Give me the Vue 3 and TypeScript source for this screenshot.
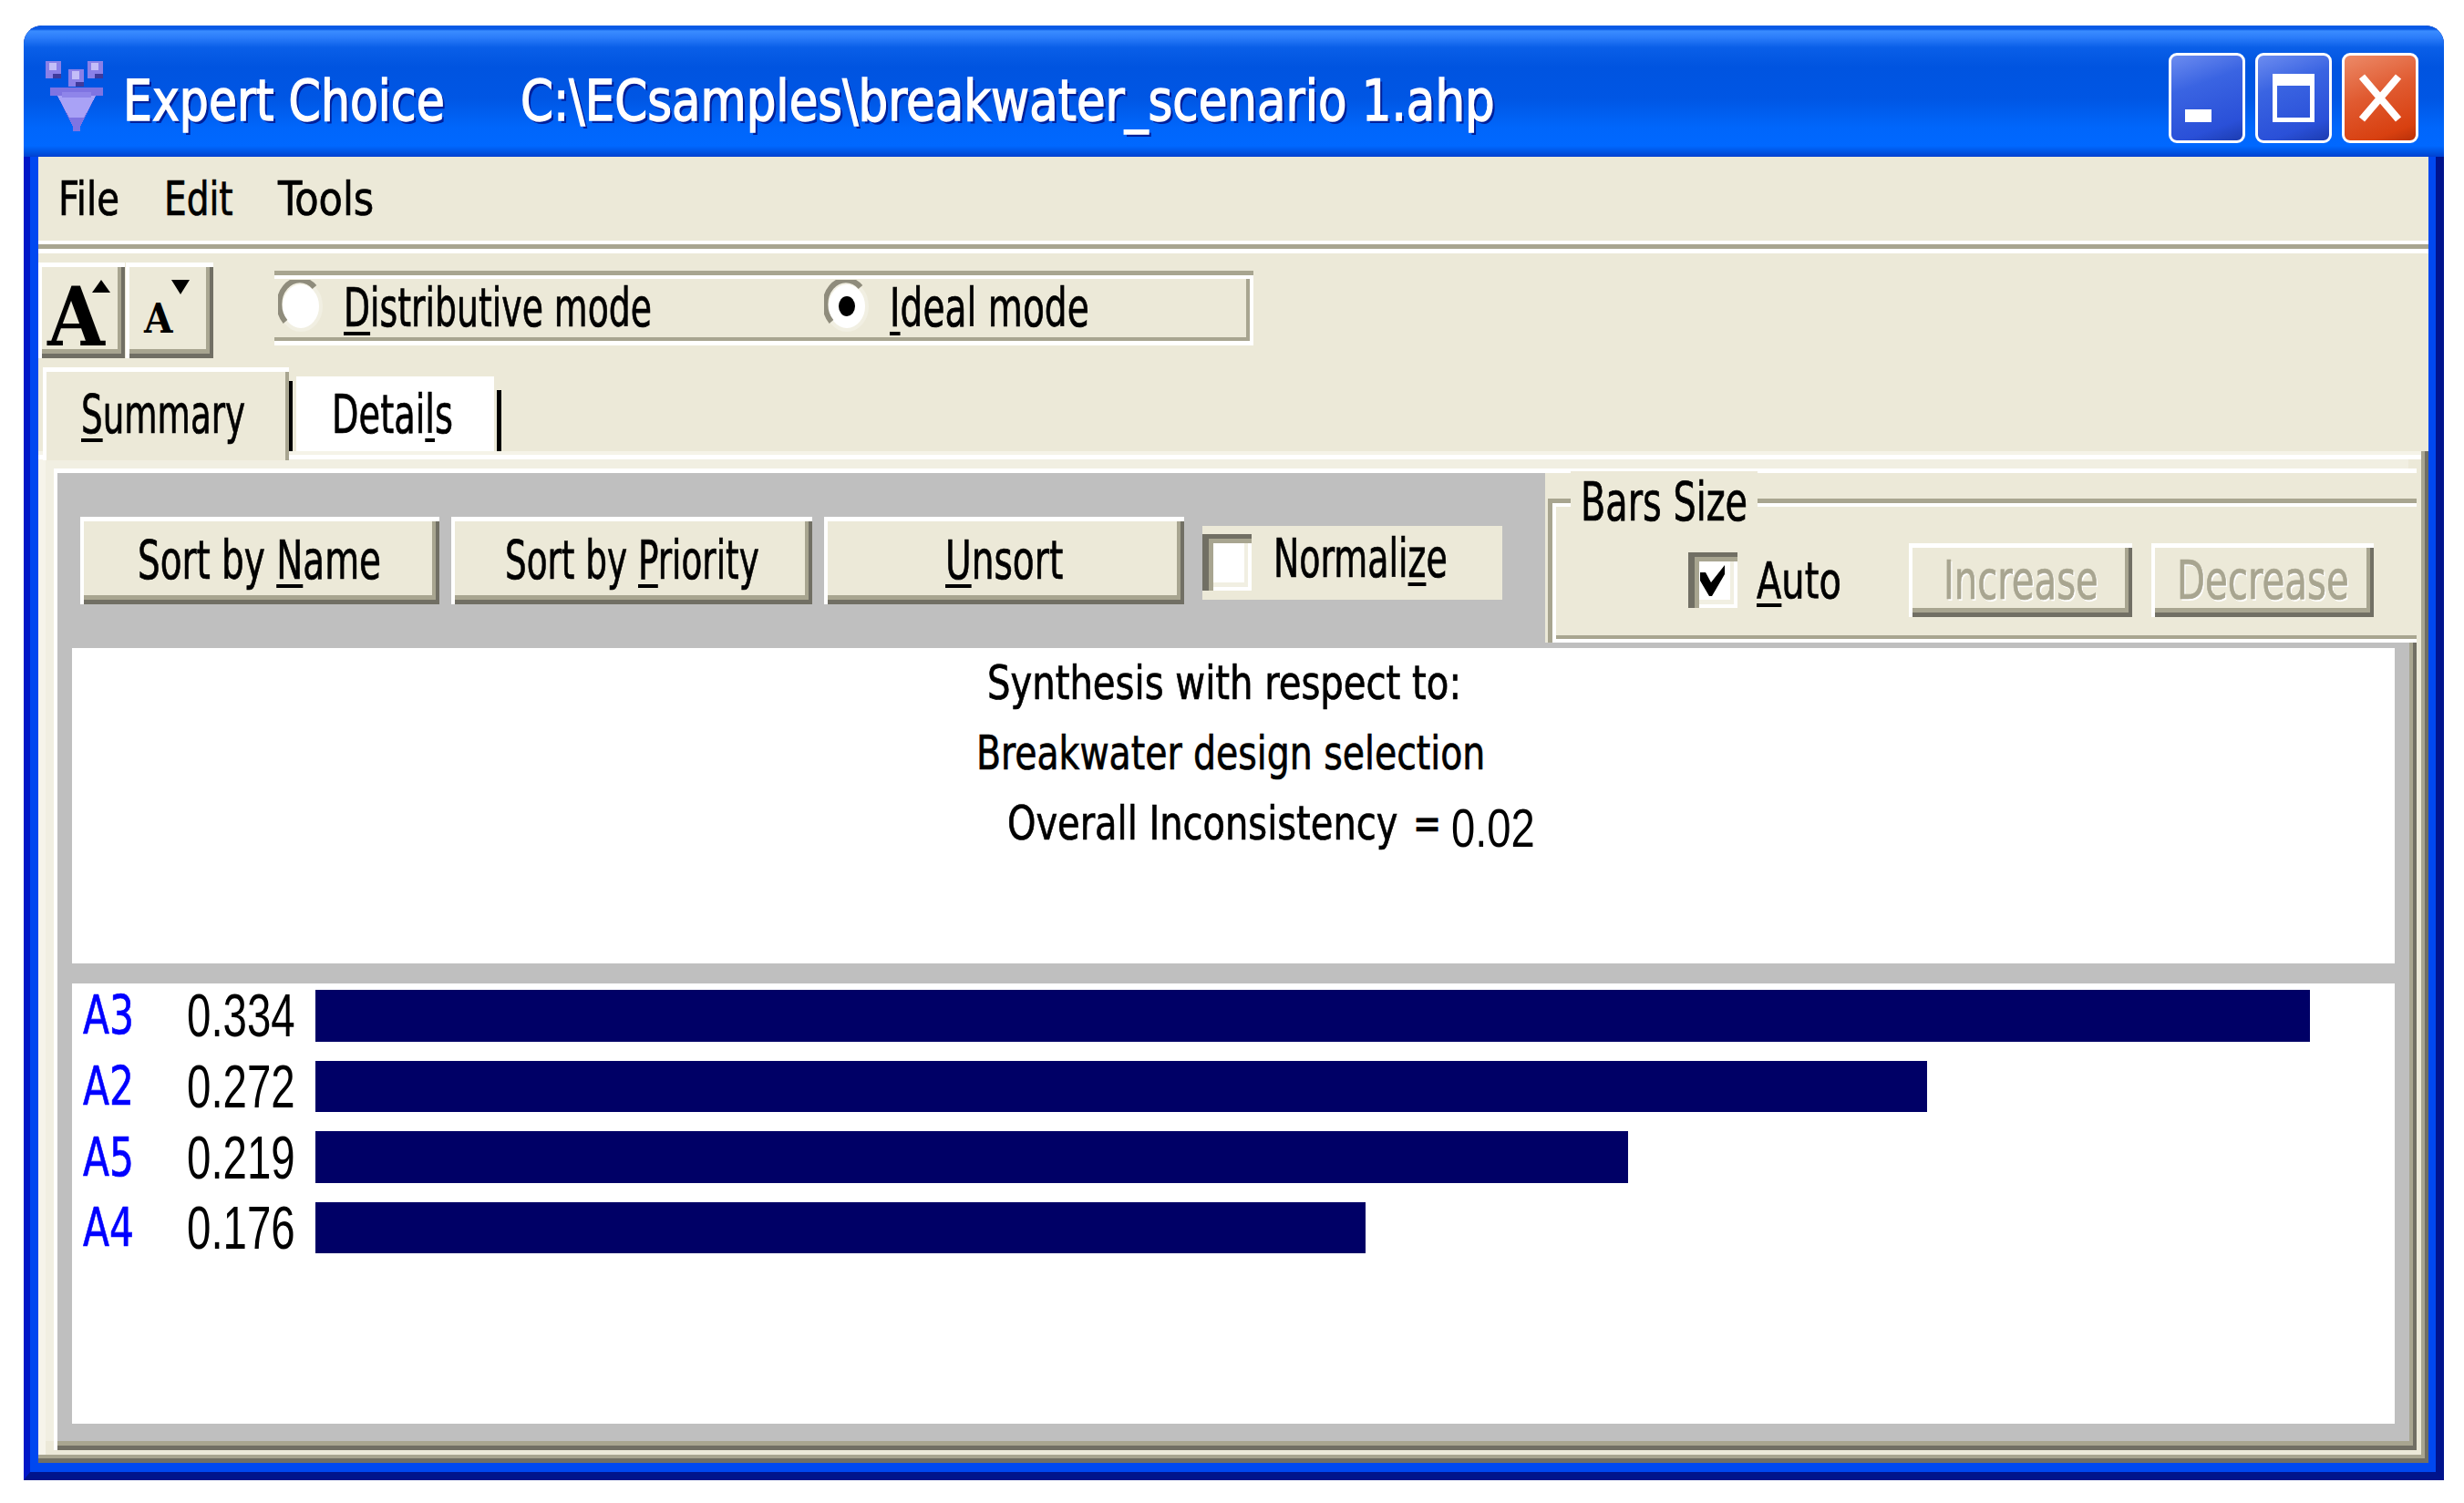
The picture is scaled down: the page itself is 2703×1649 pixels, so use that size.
<script setup lang="ts">
import type { Directive } from 'vue'

interface Row { name: string; value: string; width: number }

const rows: Row[] = [
  { name: 'A3', value: '0.334', width: 2188 },
  { name: 'A2', value: '0.272', width: 1768 },
  { name: 'A5', value: '0.219', width: 1440 },
  { name: 'A4', value: '0.176', width: 1152 },
]

// The reference is a stretched bitmap: its type is much narrower than it is tall.
const vFit: Directive<HTMLElement, number> = {
  mounted(el, binding) {
    const natural = el.offsetWidth
    el.style.transform = `scaleX(${binding.value / natural})`
    el.style.marginRight = `${binding.value - natural}px`
  },
}
</script>

<template>
  <div class="window">
    <header class="titlebar">
      <svg class="app-icon" width="64" height="77" viewBox="0 0 64 77" shape-rendering="crispEdges">
        <rect x="0" y="0" width="17" height="19" fill="#8a80e8" />
        <rect x="4" y="2" width="8" height="8" fill="#c4bef8" />
        <rect x="8" y="14" width="9" height="5" fill="#3f3a9c" />
        <rect x="25" y="9" width="17" height="19" fill="#8a80e8" />
        <rect x="29" y="11" width="8" height="9" fill="#c4bef8" />
        <rect x="33" y="23" width="9" height="5" fill="#3f3a9c" />
        <rect x="46" y="0" width="17" height="19" fill="#8a80e8" />
        <rect x="50" y="2" width="8" height="8" fill="#c4bef8" />
        <rect x="54" y="14" width="9" height="5" fill="#3f3a9c" />
        <polygon points="5,29 63,29 63,38 55,38 38,72 38,77 30,77 30,72 13,38 5,38" fill="#7f74e2" />
        <polygon points="13,38 55,38 42,62 26,62" fill="#a9a2f6" />
        <polygon points="18,34 50,34 50,40 18,40" fill="#8f85ea" />
      </svg>
      <span class="t title-text first" v-fit="353">Expert Choice</span>
      <span class="t title-text second" v-fit="1069">C:\ECsamples\breakwater_scenario 1.ahp</span>
      <div class="caption">
        <button class="cap-btn blue" type="button" aria-label="Minimize"><i class="min-glyph"></i></button>
        <button class="cap-btn blue" type="button" aria-label="Maximize"><i class="max-glyph"></i></button>
        <button class="cap-btn red" type="button" aria-label="Close">
          <svg width="46" height="53" viewBox="0 0 46 53"><path d="M3 3 L43 50 M43 3 L3 50" stroke="#fff" stroke-width="8" fill="none" /></svg>
        </button>
      </div>
    </header>

    <div class="frame">
      <div class="client">
        <nav class="menu">
          <span class="t menu-item" v-fit="67">File</span>
          <span class="t menu-item" v-fit="76">Edit</span>
          <span class="t menu-item" v-fit="105">Tools</span>
        </nav>
        <div class="menu-sep"></div>

        <div class="toolbar">
          <div class="font-btns">
            <button class="raised font-btn big" type="button">
              <span class="big-a">A</span>
              <svg class="tri-up" width="20" height="14" viewBox="0 0 20 14"><polygon points="10,0 20,14 0,14" /></svg>
            </button>
            <button class="raised font-btn small" type="button">
              <span class="small-a">A</span>
              <svg class="tri-down" width="20" height="16" viewBox="0 0 20 16"><polygon points="0,0 20,0 10,16" /></svg>
            </button>
          </div>
          <div class="mode-group">
            <svg class="radio" width="50" height="58" viewBox="0 0 50 58">
              <ellipse cx="25" cy="29" rx="22" ry="26" fill="#fff" stroke="#f1efe2" stroke-width="4" />
              <path d="M8 46 A22 26 0 0 1 40 8" fill="none" stroke="#8f8c7c" stroke-width="6" />
            </svg>
            <span class="t label" v-fit="338"><u>D</u>istributive mode</span>
            <svg class="radio second-radio" width="50" height="58" viewBox="0 0 50 58">
              <ellipse cx="25" cy="29" rx="22" ry="26" fill="#fff" stroke="#f1efe2" stroke-width="4" />
              <path d="M8 46 A22 26 0 0 1 40 8" fill="none" stroke="#8f8c7c" stroke-width="6" />
              <ellipse cx="25" cy="29" rx="9" ry="11" fill="#000" />
            </svg>
            <span class="t label" v-fit="219"><u>I</u>deal mode</span>
          </div>
        </div>

        <div class="tabs">
          <div class="tab active"><span class="t label" v-fit="180"><u>S</u>ummary</span></div>
          <div class="tab details"><div class="details-face"><span class="t label" v-fit="133">Detai<u>l</u>s</span></div></div>
        </div>

        <div class="tab-frame">
          <div class="tab-inner">
            <div class="head">
              <div class="sort-bar">
                <button class="raised cmd w-name" type="button"><span class="t label" v-fit="267">Sort by <u>N</u>ame</span></button>
                <button class="raised cmd w-priority" type="button"><span class="t label" v-fit="279">Sort by <u>P</u>riority</span></button>
                <button class="raised cmd w-unsort" type="button"><span class="t label" v-fit="129"><u>U</u>nsort</span></button>
                <label class="normalize">
                  <span class="check"></span>
                  <span class="t label normalize-text" v-fit="191">Normali<u>z</u>e</span>
                </label>
              </div>
              <div class="bars-group">
                <div class="groove">
                  <span class="legend"><span class="t label" v-fit="183">Bars Size</span></span>
                  <span class="check auto-check">
                    <svg width="30" height="36" viewBox="0 0 30 36"><path d="M1 9 L7 9 L13 20 L28 1 L28 11 L14 35 L11 35 L1 18 Z" fill="#000" /></svg>
                  </span>
                  <span class="t label auto-text" v-fit="93"><u>A</u>uto</span>
                  <button class="raised cmd off w-inc" type="button" disabled><span class="t label" v-fit="170">Increase</span></button>
                  <button class="raised cmd off w-dec" type="button" disabled><span class="t label" v-fit="189">Decrease</span></button>
                </div>
              </div>
            </div>

            <section class="pane upper">
              <p class="line l1"><span class="t text52" v-fit="520">Synthesis with respect to:</span></p>
              <p class="line l2"><span class="t text52" v-fit="558">Breakwater design selection</span></p>
              <p class="line l3">
                <span class="t text52" v-fit="428">Overall Inconsistency</span>
                <span class="t text52 equals" v-fit="31">=</span>
                <span class="t inconsistency" v-fit="92">0.02</span>
              </p>
            </section>

            <section class="pane lower">
              <div v-for="row in rows" :key="row.name" class="row">
                <span class="name-cell"><span class="t label alt" v-fit="56">{{ row.name }}</span></span>
                <span class="value-cell"><span class="t value" v-fit="119">{{ row.value }}</span></span>
                <span class="bar" :style="{ width: row.width + 'px' }"></span>
              </div>
            </section>
          </div>
        </div>
      </div>
    </div>
  </div>
</template>

<style>
html, body { margin: 0; background: #fff; }
</style>

<style scoped>
.window {
  box-sizing: border-box;
  width: 2655px;
  height: 1596px;
  margin: 28px 0 0 26px;
  display: flex;
  flex-direction: column;
  border-radius: 20px 20px 0 0;
  overflow: hidden;
  background: #00138c;
  font-family: "DejaVu Sans", "Liberation Sans", sans-serif;
  font-stretch: condensed;
  color: #000;
}
.t {
  display: inline-block;
  white-space: nowrap;
  transform-origin: left center;
  flex: none;
  -webkit-text-stroke: 0.7px currentColor;
}
u { text-decoration-thickness: 4px; text-underline-offset: 6px; }

/* title bar */
.titlebar {
  box-sizing: border-box;
  height: 144px;
  flex: none;
  display: flex;
  align-items: flex-start;
  padding: 22px 28px 0 24px;
  background: linear-gradient(180deg, #0a5ae6 0, #0a5ae6 4px, #3a8cff 6px, #2c7dfa 13px, #0a5fe8 24px, #0054e0 45px, #0056e4 80px, #0066fb 112px, #0068ff 132px, #0050de 140px, #0040d0 144px);
}
.app-icon { margin-top: 17px; flex: none; }
.title-text {
  font-size: 63px;
  line-height: 122px;
  color: #fff;
  text-shadow: 3px 3px 0 #00209a;
  -webkit-text-stroke: 1.4px #fff;
}
.first { margin-left: 21px; }
.second { margin-left: 83px; }
.caption { margin: 8px 0 0 auto; display: flex; flex: none; }
.cap-btn {
  box-sizing: border-box;
  width: 84px;
  height: 99px;
  padding: 0;
  margin-left: 11px;
  border: 3px solid #fff;
  border-radius: 9px;
  position: relative;
  display: block;
}
.blue { background: linear-gradient(160deg, #6c8cf0 0, #3a64e2 35%, #2a50d8 80%, #1c3cb0 100%); }
.red { background: linear-gradient(160deg, #ec8a68 0, #e05a30 45%, #d84010 85%, #b83008 100%); }
.min-glyph { position: absolute; left: 15px; top: 59px; width: 29px; height: 14px; background: #fff; }
.max-glyph {
  position: absolute; left: 16px; top: 20px;
  width: 46px; height: 53px; box-sizing: border-box;
  border: 5px solid #fff; border-top-width: 13px;
}
.cap-btn svg { position: absolute; left: 16px; top: 20px; }

/* frame */
.frame {
  flex: 1;
  min-height: 0;
  display: flex;
  border-left: 7px solid #0018c8;
  border-right: 9px solid #00138c;
  border-bottom: 9px solid #00148c;
  background: #0048f0;
  padding: 0 8px 10px 9px;
}
.client {
  flex: 1;
  min-width: 0;
  display: flex;
  flex-direction: column;
  background: #ece9d8;
}

/* menu */
.menu {
  height: 92px;
  flex: none;
  display: flex;
  align-items: center;
  gap: 49px;
  padding-left: 22px;
  font-size: 52px;
}
.menu-sep {
  height: 14px;
  flex: none;
  box-sizing: border-box;
  background: #a8a590;
  border-top: 4px solid #fff;
  border-bottom: 5px solid #fff;
}

/* toolbar */
.toolbar { height: 125px; flex: none; display: flex; align-items: flex-start; }
.raised {
  box-sizing: border-box;
  padding: 0;
  border: 0;
  background: #ece9d8;
  box-shadow: inset 4px 5px 0 #fff, inset -4px -5px 0 #716f64, inset -8px -10px 0 #a8a590;
  font: inherit;
  color: inherit;
  display: flex;
  align-items: center;
  justify-content: center;
}
.font-btns { display: flex; margin-top: 10px; }
.font-btn { height: 105px; position: relative; }
.big { width: 95px; }
.small { width: 96px; margin-left: 1px; }
.big-a, .small-a {
  position: absolute;
  font-family: "DejaVu Serif", serif;
  font-weight: 700;
  color: #000;
  line-height: 1;
}
.big-a { left: 10px; top: 14px; font-size: 90px; font-stretch: condensed; }
.small-a { left: 20px; top: 39px; font-size: 45px; font-stretch: condensed; }
.tri-up { position: absolute; left: 59px; top: 19px; }
.tri-down { position: absolute; left: 50px; top: 19px; }
.mode-group {
  box-sizing: border-box;
  margin: 19px 0 0 67px;
  width: 1074px;
  height: 82px;
  display: flex;
  align-items: center;
  padding-left: 4px;
  box-shadow: inset 0 5px 0 #a8a590, inset 0 9px 0 #fff, inset -4px -5px 0 #fff, inset -8px -9px 0 #a8a590;
}
.radio { flex: none; margin: -4px 22px 0 0; }
.second-radio { margin-left: 189px; }
.label { font-size: 58px; line-height: 68px; }

/* tabs */
.tabs { height: 92px; flex: none; display: flex; padding-left: 5px; align-items: flex-start; position: relative; z-index: 1; }
.tab { box-sizing: border-box; }
.active {
  width: 270px;
  height: 102px;
  padding: 18px 0 0 42px;
  background: #ece9d8;
  box-shadow: inset 4px 5px 0 #fff, inset -4px 0 0 #a8a590;
}
.details {
  width: 233px;
  height: 82px;
  margin-top: 10px;
  padding: 0 8px 0 8px;
  background:
    linear-gradient(#000, #000) left 0 top 5px / 4px 100% no-repeat,
    linear-gradient(#000, #000) right 0 top 15px / 5px 100% no-repeat;
}
.details-face {
  box-sizing: border-box;
  height: 100%;
  background: #fff;
  padding: 8px 0 0 39px;
}

/* tab frame */
.tab-frame {
  flex: 1;
  min-height: 0;
  display: flex;
  padding: 19px 13px 14px 17px;
  box-shadow:
    inset -4px -5px 0 #716f64,
    inset -8px -9px 0 #a8a590,
    inset 0 4px 0 #f5f3e8,
    inset 0 9px 0 #fff,
    inset 8px 0 0 #f6f4ea;
}
.tab-inner {
  flex: 1;
  min-width: 0;
  box-sizing: border-box;
  padding: 5px 8px 10px 4px;
  display: flex;
  flex-direction: column;
  background: #bfbfbf;
  box-shadow:
    inset 4px 5px 0 #fff,
    inset -4px -5px 0 #716f64,
    inset -8px -10px 0 #a8a590,
    -9px -10px 0 #f1efe2;
}

/* command head */
.head { height: 192px; flex: none; display: flex; }
.sort-bar { width: 1632px; flex: none; box-sizing: border-box; padding: 48px 0 0 25px; display: flex; align-items: flex-start; gap: 13px; }
.cmd { height: 96px; flex: none; }
.w-name { width: 394px; }
.w-priority { width: 396px; }
.w-unsort { width: 395px; }
.normalize {
  width: 329px;
  height: 81px;
  margin: 10px 0 0 7px;
  flex: none;
  background: #ece9d8;
  display: flex;
  align-items: flex-start;
}
.check {
  box-sizing: border-box;
  display: flex;
  align-items: center;
  justify-content: center;
  width: 54px;
  height: 62px;
  flex: none;
  margin-top: 9px;
  background: #fff;
  box-shadow: inset 7px 5px 0 #716f64, inset 12px 10px 0 #a8a590, inset -4px -4px 0 #fff, inset -8px -9px 0 #f1efe2;
}
.normalize-text { margin-top: 2px; margin-left: 24px; }
.bars-group { flex: 1; min-width: 0; margin-right: -8px; background: #ece9d8; height: 186px; padding: 28px 0 0 3px; box-sizing: border-box; }
.groove {
  position: relative;
  box-sizing: border-box;
  height: 158px;
  padding-left: 154px;
  display: flex;
  align-items: center;
  padding-top: 29px;
  padding-bottom: 8px;
  box-shadow: inset 5px 5px 0 #a8a590, inset 9px 9px 0 #fff, inset 0 -4px 0 #fff, inset 0 -8px 0 #a8a590;
}
.legend { position: absolute; left: 25px; top: -30px; padding: 0 11px; background: #ece9d8; display: flex; }
.auto-check { margin-top: 0; height: 61px; }
.auto-text { font-size: 55px; margin-left: 21px; }
.off { height: 81px; color: #a8a590; text-shadow: 2px 2px 0 #fff; }
.w-inc { width: 245px; margin-left: 74px; }
.w-dec { width: 244px; margin-left: 21px; }

/* panes */
.pane { background: #fff; margin: 0 16px; flex: none; }
.upper { height: 346px; display: flex; flex-direction: column; align-items: flex-start; }
.lower { height: 483px; margin-top: 22px; box-sizing: border-box; padding: 7px 0 0 12px; display: flex; flex-direction: column; gap: 21.17px; }
.line { margin: 0; height: 77px; display: flex; align-items: center; font-size: 52px; }
.l1 { margin-left: 1004px; }
.l2 { margin-left: 992px; }
.l3 { margin-left: 1026px; }
.text52 { font-size: 52px; line-height: 77px; }
.equals { margin-left: 17px; }
.inconsistency {
  margin-left: 10px;
  margin-top: 10px;
  font-family: "Liberation Sans", Arial, sans-serif;
  font-size: 60px;
  line-height: 70px;
  -webkit-text-stroke: 0;
}
.row { height: 56.5px; display: flex; align-items: center; flex: none; }
.name-cell { width: 114px; flex: none; display: flex; }
.value-cell { width: 141px; flex: none; display: flex; }
.alt { color: #0000ff; }
.value { font-family: "Liberation Sans", Arial, sans-serif; font-size: 67px; line-height: 56px; -webkit-text-stroke: 0; }
.bar { height: 100%; background: #000066; flex: none; }
</style>
